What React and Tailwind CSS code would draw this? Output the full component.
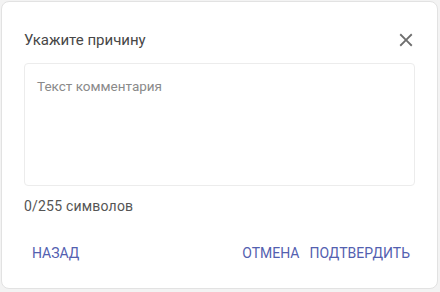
import React from 'react';

export default function App() {
  return (
    <div className="w-[440px] h-[292px] bg-[#f3f3f3] p-px font-['Roboto',sans-serif]">
      <div className="w-[437px] h-[288px] bg-white border border-[#e2e2e2] rounded-lg flex flex-col px-[22px] pt-[26px] pb-[17px]">
        {/* Header */}
        <div className="flex items-center justify-between h-6">
          <span className="text-[15px] leading-6 text-[#474747]">Укажите причину</span>
          <svg width="22" height="22" viewBox="0 0 24 24" className="mr-[-2px] text-[#6e6e6e]">
            <path
              fill="currentColor"
              d="M19 6.41 17.59 5 12 10.59 6.41 5 5 6.41 10.59 12 5 17.59 6.41 19 12 13.41 17.59 19 19 17.59 13.41 12z"
            />
          </svg>
        </div>

        {/* Comment box */}
        <div className="mt-[11px] h-[123px] border border-[#ececec] rounded px-3 pt-[10px]">
          <span className="text-[13.5px] leading-5 text-[#8a8a8a]">Текст комментария</span>
        </div>

        <div className="mt-[10px] text-[14px] leading-5 tracking-[0.2px] text-[#555]">0/255 символов</div>

        {/* Actions */}
        <div className="mt-auto flex items-center h-9 text-[14px] text-[#5360b0]">
          <button className="px-[8px] h-9 uppercase">Назад</button>
          <div className="ml-auto flex">
            <button className="px-[5px] h-9 uppercase">Отмена</button>
            <button className="px-[5px] h-9 uppercase">Подтвердить</button>
          </div>
        </div>
      </div>
    </div>
  );
}
